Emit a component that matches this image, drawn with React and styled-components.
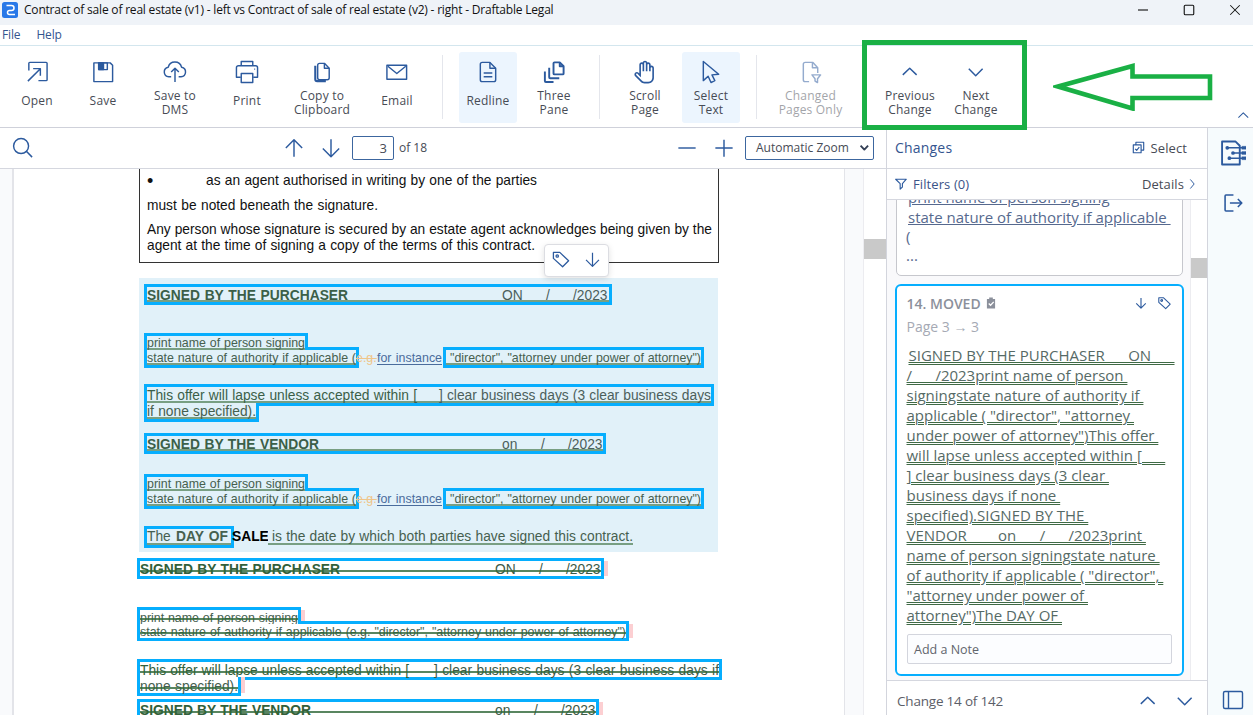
import React from 'react';
import styled, { createGlobalStyle, css } from 'styled-components';
import { LiaHandPaper } from 'react-icons/lia';

const BLUE = '#2c5a9e';

const GlobalStyle = createGlobalStyle`
    * {
        box-sizing: border-box;
    }
    body {
        margin: 0;
        background: #fff;
        overflow: hidden;
        font-family: "Open Sans", "Noto Sans", sans-serif;
    }
`;

const icons = {
    open: <><path d="M4 11V3.500a1 1 0 0 1 1-1h17a1 1 0 0 1 1 1v17a1 1 0 0 1-1 1h-8" /><path d="M3 22 16 9M8.500 9H16v7.500" /></>,
    save: <><path d="M3 3h17l2.500 2.500V22.500H3z" /><path d="M8 3v7h9V3z" /><path d="M8 3h5v7H8z" fill={BLUE} /></>,
    cloud: <><path d="M8.500 17.500H6a5 5 0 0 1-.6-9.900 7.200 7.200 0 0 1 14 0 5 5 0 0 1-.6 9.900h-2.500" /><path d="M12.500 23V8.500M8.500 12.500l4-4 4 4" /></>,
    print: <><path d="M6.500 6V1.500h12V6M6 18H1.500V8a2 2 0 0 1 2-2h18a2 2 0 0 1 2 2v10H19" /><path d="M6.500 14h12v9.500h-12z" /><path d="M20 9.500h1" /></>,
    copy: <><path d="M8 5.500a2 2 0 0 1 2-2h5l5 5v10a2 2 0 0 1-2 2h-8a2 2 0 0 1-2-2z" /><path d="M15 3.500v5h5" /><path d="M5.500 6v14a2 2 0 0 0 2 2h9" strokeWidth="2.200" /></>,
    mail: <><path d="M2 5.500h20.500v14.500H2z" /><path d="m3 6.500 9.300 7.500 9.300-7.500" /></>,
    redline: <><path d="M4.500 4.500a2 2 0 0 1 2-2h8l6 6v12a2 2 0 0 1-2 2h-12a2 2 0 0 1-2-2z" /><path d="M14.500 2.500v6h6M8 13.500h9M8 17.500h9" /></>,
    panes: <><path d="M12 3.500a1 1 0 0 1 1-1h5.500l4 4V14a1 1 0 0 1-1 1H13a1 1 0 0 1-1-1z" strokeWidth="2" /><path d="M18.500 2.500v4h4M7.500 8V18a1 1 0 0 0 1 1H18M3 12V22a1 1 0 0 0 1 1h8" strokeWidth="2" /></>,
    cursor: <path d="M4.500 1.500v20l5-4.500 3 6.500 4-2-3-6 7-.7z" />,
    filterPage: <><path d="M10.500 22.500h-4a2 2 0 0 1-2-2v-16a2 2 0 0 1 2-2h8l5 5.500v5.500" /><path d="M14 2.500v5.500h5.500M13.500 15.500h9l-3.200 4v4l-2.600-1.500v-2.500z" /></>,
    up: <path d="m5 15.500 7.200-7 7.200 7" />,
    down: <path d="m5 9 7.200 7.500L19.400 9" />,
    arrowUp: <path d="M12.500 21.500V4M4 12.500l8.500-8.500 8.500 8.500" />,
    arrowDown: <path d="M12.500 3.500v18M4 13l8.500 8.500 8.500-8.500" />,
    search: <><circle cx="10.500" cy="10.500" r="7.800" /><path d="m16 16 6 6" /></>,
    minus: <path d="M3.500 12.500h18" />,
    plus: <path d="M3.500 12.500h18M12.500 4v17.500" />,
    tag: <><path d="M3 3h8L22 13.500 14.500 21 3 10.500z" /><circle cx="7.800" cy="7.500" r="1.500" /></>,
    funnel: <path d="M3 4h19l-7 8v6l-4 3.500V12z" />,
    check: <><path d="M7.500 7.500V2.500h15v15h-5" /><path d="M2.500 7.500h15v15h-15z" /><path d="m6 15 3 3 5-6" /></>,
    right: <path d="m9 3 8 9.500L9 22" />,
    compare: <><path d="M2 1.500h13l4 4v18H2z" strokeWidth="1.800" /><path d="M7 7.500h16M12 12.500h12M9 17.500h15" strokeWidth="1.400" /><path d="M21 6h4v3h-4zM21 11h4v3h-4zM21 16h4v3h-4z" fill={BLUE} strokeWidth=".3" /><circle cx="7" cy="7.500" r="1" fill={BLUE} /><circle cx="12.500" cy="12.500" r="1" fill={BLUE} /><circle cx="9" cy="17.500" r="1" fill={BLUE} /></>,
    exit: <path d="M13 3.500H4.500a1 1 0 0 0-1 1v16a1 1 0 0 0 1 1H13M9 12.500h13.500M18 8l4.500 4.500L18 17" />,
    sidebar: <><rect x="2.500" y="3.500" width="19" height="17" rx="1.500" /><path d="M7.500 3.500v17" /></>,
    close: <path d="m4 4 17 17M21 4 4 21" />,
    box: <rect x="4" y="4" width="17" height="17" rx="2" />,
};

const Icon = ({ name, size = 24, stroke = 1.5, color = BLUE }) => (
    <Svg width={size} height={size} viewBox="0 0 25 25" fill="none" stroke={color} strokeWidth={stroke} strokeLinejoin="round">
        {icons[name]}
    </Svg>
);

const tools = [
    { icon: 'open', label: ['Open'] },
    { icon: 'save', label: ['Save'] },
    { icon: 'cloud', label: ['Save to', 'DMS'], width: 70 },
    { icon: 'print', label: ['Print'] },
    { icon: 'copy', label: ['Copy to', 'Clipboard'], width: 76 },
    { icon: 'mail', label: ['Email'] },
    null,
    { icon: 'redline', label: ['Redline'], active: true },
    { icon: 'panes', label: ['Three', 'Pane'] },
    null,
    { icon: 'hand', label: ['Scroll', 'Page'] },
    { icon: 'cursor', label: ['Select', 'Text'], active: true },
    null,
    { icon: 'filterPage', label: ['Changed', 'Pages Only'], width: 75, disabled: true },
    null,
    { icon: 'up', label: ['Previous', 'Change'] },
    { icon: 'down', label: ['Next', 'Change'] },
];

const movedLines = [
    'SIGNED BY THE PURCHASER      ON      ',
    '/      /2023print name of person ',
    'signingstate nature of authority if ',
    'applicable ( "director", "attorney ',
    'under power of attorney")This offer ',
    'will lapse unless accepted within [      ',
    '] clear business days (3 clear ',
    'business days if none ',
    'specified).SIGNED BY THE ',
    'VENDOR        on      /      /2023print ',
    'name of person signingstate nature ',
    'of authority if applicable ( "director", ',
    '"attorney under power of ',
    'attorney")The DAY OF ',
];

const SignedLine = ({ who, whoWidth, on, struck, width, top }) => (
    <Line $top={top} $height={15} $leading={17}>
        <Moved $width={width}>
            <MovedText $struck={struck}>
                <Words $width={whoWidth} $bold>{`SIGNED BY THE ${who}`}</Words>
                <Words $width={355 - whoWidth} />
                <Words $width={on === 'ON' ? 21 : 16}>{on}</Words>
                <Words $width={23} />
                <Words $width={4}>/</Words>
                <Words $width={23} />
                <Words>/2023</Words>
            </MovedText>
        </Moved>
        {struck && <PinkMark />}
    </Line>
);

const Authority = ({ top }) => (
    <>
        <Line $top={top} $height={14} $leading={15} $small>
            <Moved $width={158}><MovedText><Words $width={158}>print name of person signing</Words></MovedText></Moved>
        </Line>
        <Line $height={15} $leading={16} $small>
            <Moved $width={209}><MovedText><Words $width={209}>state nature of authority if applicable (</Words></MovedText></Moved>
            <Replaced>e.g.</Replaced>
            <Inserted><Words $width={65}>for instance</Words></Inserted>
            <Moved $width={255}><MovedText $indent><Words $width={251}>"director", "attorney under power of attorney")</Words></MovedText></Moved>
        </Line>
    </>
);

const App = () => (
    <Window>
        <GlobalStyle />
        <TitleBar>
            <Svg width="16" height="16" viewBox="0 0 16 16">
                <rect width="16" height="16" rx="2.500" fill="#2878e8" />
                <path d="M4.500 3.500h5a2.500 2.500 0 0 1 0 5H7.500a2 2 0 0 0 0 4H13" fill="none" stroke="#fff" strokeWidth="1.500" />
            </Svg>
            <Title>Contract of sale of real estate (v1) - left vs Contract of sale of real estate (v2) - right - Draftable Legal</Title>
            <WindowButtons>
                <Icon name="minus" size={14} color="#111" stroke={2} />
                <Icon name="box" size={14} color="#111" stroke={2} />
                <Icon name="close" size={14} color="#111" stroke={1.800} />
            </WindowButtons>
        </TitleBar>
        <MenuBar>
            <span>File</span>
            <span>Help</span>
        </MenuBar>
        <Toolbar>
            {tools.map((tool, i) => tool ? (
                <Tool key={i} $width={tool.width} $active={tool.active} $disabled={tool.disabled}>
                    {tool.icon === 'hand' ? <HandIcon size={26} color={BLUE} /> : <Icon name={tool.icon} />}
                    <ToolLabel $single={tool.label.length === 1}>
                        {tool.label.map(line => <span key={line}>{line}</span>)}
                    </ToolLabel>
                </Tool>
            ) : <Separator key={i} />)}
            <Collapse><Icon name="up" size={17} stroke={1.500} /></Collapse>
            <Highlight />
            <Arrow width="162" height="48" viewBox="0 0 162 48">
                <path d="M5 23.500 79.500 3v10.500H157v21.500H79.500v10.500z" fill="none" stroke="#1ab045" strokeWidth="4.600" />
            </Arrow>
        </Toolbar>
        <Body>
            <Viewer>
                <ViewerBar>
                    <Icon name="search" size={24} />
                    <Pager>
                        <Icon name="arrowUp" />
                        <Icon name="arrowDown" />
                        <PageInput>3</PageInput>
                        <span>of 18</span>
                    </Pager>
                    <Zoom>
                        <Icon name="minus" />
                        <Icon name="plus" />
                        <ZoomSelect>Automatic Zoom<Icon name="down" size={13} stroke={3.600} color="#333f55" /></ZoomSelect>
                    </Zoom>
                </ViewerBar>
                <Pages>
                    <Page>
                        <Clause>
                            <Bullet><i>•</i><Words $width={331}>as an agent authorised in writing by one of the parties</Words></Bullet>
                            <ClauseLine $top={9}><Words $width={231}>must be noted beneath the signature.</Words></ClauseLine>
                            <ClauseLine $top={8}><Words $width={565}>Any person whose signature is secured by an estate agent acknowledges being given by the</Words></ClauseLine>
                            <ClauseLine><Words $width={388}>agent at the time of signing a copy of the terms of this contract.</Words></ClauseLine>
                            <Popup>
                                <Icon name="tag" size={20} stroke={1.600} />
                                <Icon name="arrowDown" size={19} stroke={1.600} />
                            </Popup>
                        </Clause>
                        <MovedBlock>
                            <SignedLine who="PURCHASER" whoWidth={201} on="ON" width={462} top={9} />
                            <Authority top={34} />
                            <Line $top={22} $height={16} $leading={18}>
                                <Moved $width={564}><MovedText>
                                    <Words $width={270}>This offer will lapse unless accepted within [</Words>
                                    <Words $width={22} />
                                    <Words $width={272}>] clear business days (3 clear business days</Words>
                                </MovedText></Moved>
                            </Line>
                            <Line $height={16} $leading={18}>
                                <Moved $width={109}><MovedText><Words $width={109}>if none specified).</Words></MovedText></Moved>
                            </Line>
                            <SignedLine who="VENDOR" whoWidth={172} on="on" width={456} top={17} />
                            <Authority top={26} />
                            <Line $top={23} $height={16} $leading={15}>
                                <Moved $width={84}><MovedText><Words $width={81}>The <b>DAY OF</b></Words></MovedText></Moved>
                                <Sale>SALE</Sale>
                                <MovedText $indent><Words $width={361}>is the date by which both parties have signed this contract.</Words></MovedText>
                            </Line>
                        </MovedBlock>
                        <SignedLine who="PURCHASER" whoWidth={200} on="ON" width={461} top={9} struck />
                        <Line $top={34} $height={14} $leading={17} $small>
                            <Moved $width={158}><MovedText $struck><Words $width={158}>print name of person signing</Words></MovedText></Moved>
                            <PinkMark />
                        </Line>
                        <Line $height={14} $leading={17} $small>
                            <Moved $width={486}><MovedText $struck><Words $width={486}>state nature of authority if applicable (e.g. "director", "attorney under power of attorney")</Words></MovedText></Moved>
                            <PinkMark />
                        </Line>
                        <Line $top={24} $height={15} $leading={17}>
                            <Moved $width={579}><MovedText $struck>
                                <Words $width={269}>This offer will lapse unless accepted within [</Words>
                                <Words $width={25} />
                                <Words $width={285}>] clear business days (3 clear business days if</Words>
                            </MovedText></Moved>
                        </Line>
                        <Line $height={16} $leading={19}>
                            <Moved $width={98}><MovedText $struck><Words $width={98}>none specified).</Words></MovedText></Moved>
                            <PinkMark />
                        </Line>
                        <SignedLine who="VENDOR" whoWidth={171} on="on" width={456} top={9} struck />
                    </Page>
                    <ViewerScroll><Thumb $top={70} /></ViewerScroll>
                </Pages>
            </Viewer>
            <Panel>
                <PanelHeader>
                    <PanelTitle>Changes</PanelTitle>
                    <SelectLink><Icon name="check" size={13} stroke={2.200} />Select</SelectLink>
                </PanelHeader>
                <Filters>
                    <FilterLabel><Icon name="funnel" size={14} stroke={2} />Filters (0)</FilterLabel>
                    <Details>Details<Icon name="right" size={12} stroke={2} /></Details>
                </Filters>
                <ListArea>
                    <Cards>
                        <PreviousCard>
                            <u>print name of person signing</u>
                            <u>state nature of authority if applicable </u>
                            <span>(</span>
                            <span>...</span>
                        </PreviousCard>
                        <Card>
                            <CardHeader>
                                <CardTitle>14. MOVED</CardTitle>
                                <Svg width="10" height="12" viewBox="0 0 11 13">
                                    <path d="M1 2h2.500V.5h4V2H10v10.500H1z" fill="#8b909b" />
                                    <path d="m3 7 2 2 3.500-3.800" fill="none" stroke="#fff" strokeWidth="1.400" />
                                </Svg>
                                <CardActions>
                                    <Icon name="arrowDown" size={14} stroke={2} />
                                    <Icon name="tag" size={15} stroke={1.800} />
                                </CardActions>
                            </CardHeader>
                            <CardPage>Page 3 → 3</CardPage>
                            <CardText>
                                {movedLines.map(line => <span key={line}>{line}</span>)}
                            </CardText>
                            <Note>Add a Note</Note>
                        </Card>
                    </Cards>
                    <PanelScroll><Thumb $top={58} /></PanelScroll>
                </ListArea>
                <PanelFooter>
                    <span>Change 14 of 142</span>
                    <Icon name="up" />
                    <Icon name="down" />
                </PanelFooter>
            </Panel>
            <Rail>
                <Icon name="compare" size={26} stroke={1.600} />
                <Icon name="exit" size={22} stroke={1.800} />
                <Icon name="sidebar" size={25} stroke={1.400} />
            </Rail>
        </Body>
    </Window>
);

const Svg = styled.svg`
    display: block;
    flex: none;
`;

const HandIcon = styled(LiaHandPaper)`
    flex: none;
    margin: -1px 0;
`;

const Window = styled.div`
    display: flex;
    flex-direction: column;
    width: 1253px;
    height: 715px;
    overflow: hidden;
    background: #fff;
`;

const TitleBar = styled.div`
    display: flex;
    align-items: center;
    height: 25px;
    flex: none;
    padding: 0 5px 6px 2px;
    background: #eff3f8;
`;

const Title = styled.span`
    margin-left: 6px;
    font-size: 12px;
    letter-spacing: -0.2px;
    color: #111;
    white-space: nowrap;
`;

const WindowButtons = styled.div`
    display: flex;
    gap: 32px;
    margin-left: auto;
    padding-right: 6px;
`;

const MenuBar = styled.div`
    display: flex;
    gap: 16px;
    height: 21px;
    flex: none;
    padding-left: 2px;
    border-bottom: 1px solid #d3e6ee;
    font-size: 12px;
    line-height: 20px;
    letter-spacing: -0.15px;
    color: #34558f;
`;

const Toolbar = styled.div`
    position: relative;
    display: flex;
    gap: 8px;
    height: 82px;
    flex: none;
    padding: 6px 8px 4px;
    border-bottom: 1px solid #cfd1da;
`;

const Tool = styled.div`
    display: flex;
    flex-direction: column;
    align-items: center;
    width: ${p => p.$width || 58}px;
    height: 71px;
    flex: none;
    padding-top: 8px;
    border-radius: 3px;
    background: ${p => p.$active ? '#ecf5fe' : 'transparent'};
    opacity: ${p => p.$disabled ? 0.5 : 1};
`;

const ToolLabel = styled.div`
    display: flex;
    flex-direction: column;
    align-items: center;
    margin-top: ${p => p.$single ? 10 : 5}px;
    font-size: 12px;
    line-height: 14px;
    letter-spacing: 0.2px;
    color: #474b55;
    white-space: nowrap;
`;

const Separator = styled.div`
    width: 1px;
    height: 64px;
    flex: none;
    margin: 3px 8px 0;
    background: #e4e6ec;
`;

const Collapse = styled.div`
    margin: 55px -7px 0 auto;
`;

/* callout drawn over the ribbon */
const Highlight = styled.div`
    position: absolute;
    left: 862px;
    top: -6px;
    width: 165px;
    height: 90px;
    border: 5px solid #1ab045;
    z-index: 3;
`;

const Arrow = styled(Svg)`
    position: absolute;
    left: 1053px;
    top: 17px;
`;

const Body = styled.div`
    display: flex;
    flex: 1;
    min-height: 0;
`;

const Viewer = styled.div`
    display: flex;
    flex-direction: column;
    width: 886px;
    flex: none;
`;

const ViewerBar = styled.div`
    display: flex;
    align-items: center;
    height: 41px;
    flex: none;
    padding: 0 12px 0 11px;
    border-bottom: 1px solid #d5d7df;
    font-size: 12px;
    color: #474b55;
`;

const Pager = styled.div`
    display: flex;
    align-items: center;
    gap: 13px;
    margin-left: 247px;
    span {
        margin: -1px 0 0 -8px;
    }
`;

const PageInput = styled.div`
    width: 42px;
    height: 24px;
    margin-left: -4px;
    padding-right: 6px;
    border: 1px solid #3c669f;
    border-radius: 2px;
    line-height: 23px;
    text-align: right;
    font-size: 13px;
`;

const Zoom = styled.div`
    display: flex;
    align-items: center;
    gap: 13px;
    margin-left: auto;
`;

const ZoomSelect = styled.div`
    display: flex;
    align-items: center;
    justify-content: space-between;
    width: 129px;
    height: 24px;
    margin-left: -4px;
    padding: 0 2px 2px 10px;
    border: 1px solid #3c669f;
    border-radius: 2px;
    white-space: nowrap;
`;

const Pages = styled.div`
    display: flex;
    flex: 1;
    min-height: 0;
    padding-left: 12px;
    background: #f9fafc;
`;

const Page = styled.div`
    width: 833px;
    flex: none;
    padding-left: 126px;
    overflow: hidden;
    border: solid #e3e4e9;
    border-width: 0 1px 0 2px;
    background: #fff;
    font-family: "Liberation Sans", Arial, sans-serif;
    font-size: 13.75px;
    color: #111;
`;

const Clause = styled.div`
    position: relative;
    width: 580px;
    height: 94px;
    margin-left: -1px;
    padding: 4px 0 0 7px;
    border: 1px solid #333;
    border-top: none;
`;

const ClauseLine = styled.div`
    display: flex;
    height: 16px;
    margin-top: ${p => p.$top || 0}px;
    line-height: 16px;
`;

const Bullet = styled(ClauseLine)`
    i {
        width: 59px;
        font-size: 18px;
        font-style: normal;
    }
`;

/* a run of words set to a known measure */
const Words = styled.span`
    display: block;
    flex: none;
    width: ${p => p.$width ? `${p.$width}px` : 'auto'};
    font-weight: ${p => p.$bold ? 'bold' : 'normal'};
    text-align-last: justify;
    white-space: nowrap;
`;

const Popup = styled.div`
    position: absolute;
    left: 404px;
    top: 75px;
    z-index: 4;
    display: flex;
    align-items: center;
    justify-content: center;
    gap: 12px;
    width: 65px;
    height: 33px;
    padding: 0 1px 2px 0;
    border: 1px solid #dcdde2;
    border-radius: 4px;
    background: #fff;
    box-shadow: 0 2px 6px rgba(0, 0, 0, 0.12);
`;

const MovedBlock = styled.div`
    display: flow-root;
    width: 579px;
    height: 274px;
    margin: 15px 0 0 -1px;
    padding-left: 8px;
    background: #e1f1f9;
`;

const Line = styled.div`
    display: flex;
    height: ${p => p.$height}px;
    margin-top: ${p => p.$top || 0}px;
    font-size: ${p => p.$small ? 12.4 : 13.8}px;
    line-height: ${p => p.$leading || p.$height}px;
    color: #4c5f5c;
    white-space: nowrap;
`;

const Moved = styled.span`
    width: ${p => p.$width}px;
    flex: none;
    box-shadow: 0 0 0 3px #06aefe;
`;

const struckLine = css`
    &::after {
        content: "";
        position: absolute;
        left: 0;
        right: 0;
        top: 60%;
        height: 2px;
        background: rgba(48, 104, 56, 0.8);
    }
`;

const MovedText = styled.span`
    position: relative;
    z-index: 1;
    display: flex;
    height: 100%;
    padding-left: ${p => p.$indent ? 4 : 0}px;
    background: ${p => p.$struck ? '#fff' : '#e1f1f9'};
    box-shadow: ${p => p.$struck ? 'none' : 'inset 0 -2px 0 #789f83'};
    ${Words} {
        color: ${p => p.$struck ? '#3d5a48' : 'inherit'};
    }
    ${Words}:first-child {
        color: #46604f;
    }
    ${Words}:first-child:not(:only-child) {
        color: ${p => p.$struck ? '#33603a' : '#3b5f48'};
    }
    ${p => p.$struck && struckLine}
`;

const PinkMark = styled.span`
    width: 4px;
    margin-left: 3px;
    background: #fccfd2;
`;

const Replaced = styled.span`
    width: 21px;
    padding-left: 0;
    color: #efc58a;
    text-decoration: line-through;
`;

const Inserted = styled.span`
    width: 69px;
    color: #4a6c9c;
    text-decoration: underline;
    text-underline-offset: 2px;
`;

const Sale = styled.b`
    width: 37px;
    padding-left: 1px;
    color: #000;
`;

const ViewerScroll = styled.div`
    width: 23px;
    margin-left: auto;
    border-left: 1px solid #ececf0;
    background: #fff;
`;

const Thumb = styled.div`
    height: 20px;
    margin-top: ${p => p.$top}px;
    background: #c9c9c9;
`;

const Panel = styled.div`
    display: flex;
    flex-direction: column;
    width: 322px;
    flex: none;
    border: solid #d3d5dd;
    border-width: 0 1px;
`;

const PanelHeader = styled.div`
    display: flex;
    align-items: center;
    justify-content: space-between;
    height: 41px;
    flex: none;
    padding: 0 20px 1px 8px;
    border-bottom: 1px solid #d5d7df;
`;

const PanelTitle = styled.span`
    font-size: 14px;
    color: #34558f;
    letter-spacing: 0.2px;
`;

const SelectLink = styled.span`
    display: flex;
    align-items: center;
    gap: 6px;
    font-size: 13px;
    letter-spacing: 0.1px;
    color: #474b55;
`;

const Filters = styled(PanelHeader)`
    height: 31px;
    padding: 0 9px 0 7px;
`;

const FilterLabel = styled(SelectLink)`
    gap: 5px;
    color: #3b5488;
`;

const Details = styled(SelectLink)`
    gap: 2px;
`;

const ListArea = styled.div`
    display: flex;
    flex: 1;
    min-height: 0;
    background: #f9f9fb;
`;

const Cards = styled.div`
    width: 304px;
    padding: 0 7px 0 8px;
    overflow: hidden;
`;

const PreviousCard = styled.div`
    display: flex;
    flex-direction: column;
    align-items: flex-start;
    width: 287px;
    height: 90px;
    margin: -14px 0 0 1px;
    padding-left: 9px;
    border: 1px solid #c6c7cd;
    border-radius: 5px;
    background: #fff;
    font-size: 15px;
    line-height: 20px;
    color: #56698e;
    white-space: pre;
    u {
        margin-left: 2px;
    }
    span {
        margin-top: -1px;
    }
`;

const Card = styled.div`
    width: 289px;
    height: 392px;
    margin-top: 8px;
    padding: 7px 9px 0 9.5px;
    border: 2px solid #06aefe;
    border-radius: 6px;
    background: #fff;
`;

const CardHeader = styled.div`
    display: flex;
    align-items: center;
    gap: 5px;
    height: 20px;
`;

const CardTitle = styled.span`
    font-size: 14px;
    font-weight: 600;
    color: #8b909b;
`;

const CardActions = styled.div`
    display: flex;
    align-items: center;
    gap: 9px;
    margin-left: auto;
    padding-right: 1px;
`;

const CardPage = styled.div`
    height: 32px;
    font-size: 14px;
    line-height: 27px;
    color: #a5a9b4;
`;

const CardText = styled.div`
    display: flex;
    flex-direction: column;
    align-items: flex-start;
    font-size: 15px;
    line-height: 20px;
    color: #566a66;
    white-space: pre;
    span {
        text-decoration: underline double #3f6a45 1px;
    }
    span:first-child {
        margin-left: 2px;
    }
`;

const Note = styled.div`
    width: 265px;
    height: 30px;
    margin-top: 9px;
    padding-left: 6.5px;
    border: 1px solid #d3d5dd;
    border-radius: 2px;
    background: #fcfdff;
    font-size: 12.5px;
    line-height: 29px;
    color: #62656d;
`;

const PanelScroll = styled.div`
    width: 17px;
    margin-left: auto;
    border-left: 1px solid #ececf0;
    background: #fff;
`;

const PanelFooter = styled.div`
    display: flex;
    align-items: center;
    gap: 13px;
    height: 35px;
    flex: none;
    padding: 6px 10px 0 10px;
    border-top: 1px solid #d5d7df;
    font-size: 13.5px;
    letter-spacing: -0.2px;
    color: #5b5e68;
    span {
        margin-right: auto;
    }
`;

const Rail = styled.div`
    display: flex;
    flex-direction: column;
    align-items: center;
    flex: 1;
    padding: 12px 0 2px 5px;
    background: #f6fbfd;
    svg:nth-child(2) {
        margin-top: 26px;
    }
    svg:last-child {
        margin-top: auto;
    }
`;

export default App;
